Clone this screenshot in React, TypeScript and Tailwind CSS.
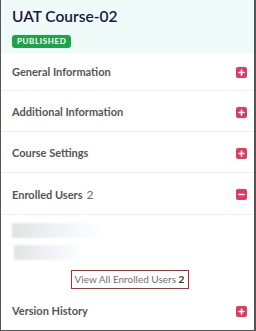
import { Plus, Minus } from 'lucide-react'

const ToggleIcon = ({ open }: { open?: boolean }) => (
  <span className="flex h-[11px] w-[11px] items-center justify-center rounded-[2px] bg-[#e03a5e]">
    {open ? (
      <Minus className="h-[9px] w-[9px] text-white" strokeWidth={4} />
    ) : (
      <Plus className="h-[9px] w-[9px] text-white" strokeWidth={4} />
    )}
  </span>
)

const Section = ({
  title,
  count,
  open,
  className = '',
}: {
  title: string
  count?: number
  open?: boolean
  className?: string
}) => (
  <div className={`flex items-center justify-between pl-[11px] pr-[7px] pt-[2px] ${className}`}>
    <span className="text-[11px] font-bold text-[#555555]">
      {title}
      {count !== undefined && <span className="ml-[4px] text-[12px] font-normal text-[#6b6b6b]">{count}</span>}
    </span>
    <ToggleIcon open={open} />
  </div>
)

export default function App() {
  return (
    <div
      className="flex h-[331px] w-[256px] flex-col overflow-hidden border-b border-l border-r-2 border-[#555555] bg-white"
      style={{ fontFamily: 'Lato, sans-serif' }}
    >
      {/* Header */}
      <div className="h-[53px] shrink-0 bg-[#eefbf8] pl-[11px] pt-[7px]">
        <h1 className="text-[15.5px] leading-[19px] font-semibold text-[#1b1547]">UAT Course-02</h1>
        <span className="mt-[3px] inline-block rounded-[3px] bg-[#1fa34a] px-[5px] text-[8px] leading-[13px] font-bold tracking-[0.6px] text-white">
          PUBLISHED
        </span>
      </div>

      <Section title="General Information" className="h-[38px] border-b border-[#eef1f1]" />
      <Section title="Additional Information" className="h-[41px] border-b border-[#eef1f1]" />
      <Section title="Course Settings" className="h-[41px] border-b border-[#eef1f1]" />
      <Section title="Enrolled Users" count={2} open className="h-[42px] border-b border-[#eef1f1]" />

      {/* Enrolled users (blurred) */}
      <div className="flex flex-col gap-[7px] pt-[8px]">
        <div className="ml-[11px] h-[15px] w-[90px] bg-gradient-to-r from-[#e2e2e2] via-[#eff2f8] to-white blur-[1px]" />
        <div className="ml-[13px] h-[15px] w-[70px] bg-gradient-to-r from-[#e2e2e2] via-[#eff2f8] to-white blur-[1px]" />
      </div>

      <div className="mt-[10px] flex justify-center pl-[4px]">
        <button className="h-[19px] w-[118px] whitespace-nowrap border border-[#c0272d] text-[10px] leading-[17px] text-[#707070]">
          View All Enrolled Users <span className="font-bold text-[#333333]">2</span>
        </button>
      </div>

      <Section title="Version History" className="mt-[6px] h-[30px]" />
    </div>
  )
}
